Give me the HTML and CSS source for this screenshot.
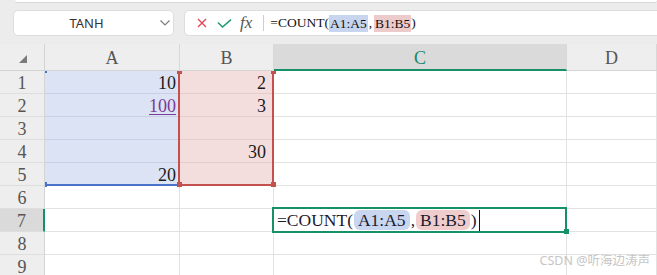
FILE: index.html
```html
<!DOCTYPE html>
<html lang="zh">
<head>
    <meta charset="UTF-8">
    <title>COUNT</title>
    <link rel="stylesheet" href="styles.css">
</head>
<body>
    <div class="top-strip"></div>
    <div class="toolbar">
        <div class="name-box">
            <span class="name-text">TANH</span>
            <svg class="chevron" width="10" height="6" viewBox="0 0 10 6"><polyline points="0.5,0.5 5,5 9.5,0.5" fill="none" stroke="#7a7a7a" stroke-width="1.1"/></svg>
        </div>
        <div class="formula-bar">
            <svg class="icon-x" width="10" height="10" viewBox="0 0 10 10"><path d="M1 1 L9 9 M9 1 L1 9" stroke="#e2475a" stroke-width="1.4" fill="none"/></svg>
            <svg class="icon-ok" width="15" height="9" viewBox="0 0 15 9"><path d="M1 3.5 L5.5 8 L14 0.6" stroke="#1f9c72" stroke-width="1.5" fill="none"/></svg>
            <span class="fx">fx</span>
            <span class="sep"></span>
            <span class="formula-text">=COUNT(<span class="ref-a">A1:A5</span><span class="comma">,</span><span class="ref-b">B1:B5</span>)</span>
        </div>
    </div>

    <div class="sheet">
        <div class="corner"><span class="tri"></span></div>
        <div class="ch">A</div>
        <div class="ch">B</div>
        <div class="ch active">C</div>
        <div class="ch">D</div>

        <div class="rh">1</div>
        <div class="c a">10</div>
        <div class="c b">2</div>
        <div class="c"></div>
        <div class="c"></div>

        <div class="rh">2</div>
        <div class="c a"><span class="link">100</span></div>
        <div class="c b">3</div>
        <div class="c"></div>
        <div class="c"></div>

        <div class="rh">3</div>
        <div class="c a"></div>
        <div class="c b"></div>
        <div class="c"></div>
        <div class="c"></div>

        <div class="rh">4</div>
        <div class="c a"></div>
        <div class="c b">30</div>
        <div class="c"></div>
        <div class="c"></div>

        <div class="rh">5</div>
        <div class="c a last">20</div>
        <div class="c b last"></div>
        <div class="c"></div>
        <div class="c"></div>

        <div class="rh">6</div>
        <div class="c"></div>
        <div class="c"></div>
        <div class="c"></div>
        <div class="c"></div>

        <div class="rh active">7</div>
        <div class="c"></div>
        <div class="c"></div>
        <div class="c edit">=COUNT(<span class="pill pill-a">A1:A5</span>,<span class="pill pill-b">B1:B5</span>)<span class="caret"></span></div>
        <div class="c"></div>

        <div class="rh">8</div>
        <div class="c"></div>
        <div class="c"></div>
        <div class="c"></div>
        <div class="c"></div>

        <div class="rh">9</div>
        <div class="c"></div>
        <div class="c"></div>
        <div class="c"></div>
        <div class="c"></div>

        <!-- range markers -->
        <div class="range-b"></div>
        <div class="dot dot-b tl"></div>
        <div class="dot dot-b tr"></div>
        <div class="dot dot-b bl"></div>
        <div class="dot dot-b br"></div>
        <div class="range-a"></div>
        <div class="dot-a top"></div>
        <div class="dot-a bottom"></div>
        <div class="active-cell"></div>
        <div class="fill-handle"></div>
    </div>

    <div class="watermark">CSDN @听海边涛声</div>
</body>
</html>
```

FILE: styles.css
```css
body {
    margin: 0;
    background-color: #ececec;
    font-family: 'Liberation Serif', serif;
    overflow: hidden;
    position: relative;
    height: 275px;
}

.top-strip {
    height: 2px;
    margin-left: 15px;
    background-color: #fff;
    border-bottom: 1px solid #d8d8d8;
    border-radius: 0 0 6px 6px;
}

.toolbar {
    display: flex;
    align-items: flex-start;
    height: 41px;
    padding-top: 7px;
    box-sizing: border-box;
}

.name-box {
    margin-left: 13px;
    width: 161px;
    height: 26px;
    box-sizing: border-box;
    background-color: #fff;
    border: 1px solid #dddddd;
    border-radius: 5px;
    display: flex;
    align-items: center;
}

.name-text {
    font-family: 'Noto Sans', sans-serif;
    font-size: 13px;
    color: #333;
    width: 141px;
    text-align: center;
    padding-left: 2px;
}

.chevron {
    margin-left: 3px;
}

.formula-bar {
    margin-left: 10px;
    flex: 1;
    margin-right: -12px;
    height: 26px;
    box-sizing: border-box;
    background-color: #fff;
    border: 1px solid #dddddd;
    border-radius: 5px;
    display: flex;
    align-items: center;
}

.icon-x {
    margin-left: 12px;
}

.icon-ok {
    margin-left: 10px;
    margin-top: 1px;
}

.fx {
    margin-left: 8px;
    font-style: italic;
    font-size: 17px;
    color: #555;
    line-height: 20px;
}

.sep {
    margin-left: 11px;
    width: 1px;
    height: 16px;
    background-color: #cfcfcf;
}

.formula-text {
    margin-left: 6px;
    font-size: 13.5px;
    color: #111;
    display: flex;
    align-items: center;
    height: 24px;
}

.ref-a,
.ref-b {
    display: inline-block;
    height: 17px;
    line-height: 18px;
    padding: 0 1px;
}

.comma {
    padding: 0 2px 0 1px;
}

.ref-a {
    background-color: #c8d5ef;
}

.ref-b {
    background-color: #eecbcb;
}

/* grid */
.sheet {
    position: relative;
    display: grid;
    grid-template-columns: 45px 135px 94px 293px 1fr;
    grid-template-rows: 27px repeat(9, 23px);
    background-color: #fff;
}

.sheet > div {
    box-sizing: border-box;
}

.corner,
.ch,
.rh {
    background-color: #eeeeee;
    color: #555;
    font-size: 18px;
    text-align: center;
}

.corner {
    border-right: 1px solid #d4d4d4;
    border-bottom: 1px solid #d4d4d4;
    position: relative;
}

.tri {
    position: absolute;
    left: 19px;
    top: 11px;
    width: 0;
    height: 0;
    border-left: 8px solid transparent;
    border-bottom: 8px solid #7a7a7a;
}

.ch {
    border-right: 1px solid #d8d8d8;
    border-bottom: 1px solid #d4d4d4;
    padding-top: 5px;
    line-height: 19px;
}

.ch.active {
    background-color: #dadada;
    color: #16896a;
    border-bottom: 2px solid #169067;
}

.rh {
    border-right: 1px solid #d4d4d4;
    border-bottom: 1px solid #dedede;
    padding-top: 3px;
    line-height: 19px;
}

.rh.active {
    background-color: #dadada;
    border-right: 2px solid #169067;
}

.c {
    border-right: 1px solid #e2e2e2;
    border-bottom: 1px solid #e2e2e2;
    font-size: 18px;
    color: #1b1b1b;
    text-align: right;
    padding: 3px 3px 0 0;
    line-height: 19px;
}

.c.a {
    background-color: #dce3f4;
    border-bottom-color: #c9d0e4;
}

.c.b {
    background-color: #f4dedd;
    border-bottom-color: #e3cccb;
    padding-right: 7px;
}

.c.last {
    border-bottom-color: #e2e2e2;
}

.link {
    color: #7d3a97;
    text-decoration: underline;
    text-underline-offset: 2px;
}

.c.edit {
    text-align: left;
    padding: 0 0 0 3px;
    display: flex;
    align-items: center;
    color: #1a1a2e;
    font-size: 17.5px;
    white-space: nowrap;
}

.pill {
    display: inline-block;
    height: 20px;
    line-height: 21px;
    padding: 0 4px;
    border-radius: 6px;
    margin: 0 1px;
}

.pill-a {
    background-color: #c8d6f0;
}

.pill-b {
    background-color: #f0cdcd;
}

.caret {
    display: inline-block;
    width: 1px;
    height: 21px;
    background-color: #111;
    margin-left: 2px;
}

/* range highlights */
.range-b {
    position: absolute;
    left: 178px;
    top: 27px;
    width: 96px;
    height: 115px;
    box-sizing: border-box;
    border: 2px solid #c4514e;
    border-top: none;
}

.dot {
    position: absolute;
    width: 5px;
    height: 5px;
    background-color: #c4514e;
}

.dot.tl { left: 177px; top: 27px; height: 3px; }
.dot.tr { left: 271px; top: 27px; height: 3px; }
.dot.bl { left: 177px; top: 138px; }
.dot.br { left: 271px; top: 138px; }

.range-a {
    position: absolute;
    left: 45px;
    top: 140px;
    width: 133px;
    height: 2px;
    background-color: #4a72c8;
}

.dot-a {
    position: absolute;
    left: 45px;
    width: 2px;
    background-color: #4a72c8;
}

.dot-a.top { top: 27px; height: 2px; }
.dot-a.bottom { top: 138px; height: 5px; }

.active-cell {
    position: absolute;
    left: 272px;
    top: 163px;
    width: 295px;
    height: 26px;
    box-sizing: border-box;
    border: 2px solid #169067;
}

.fill-handle {
    position: absolute;
    left: 564px;
    top: 185px;
    width: 5px;
    height: 5px;
    background-color: #169067;
}

.watermark {
    position: absolute;
    right: 7px;
    bottom: 6px;
    font-family: 'Noto Sans', 'Noto Sans CJK SC', sans-serif;
    font-size: 12.5px;
    color: #c6c6c6;
}
```
